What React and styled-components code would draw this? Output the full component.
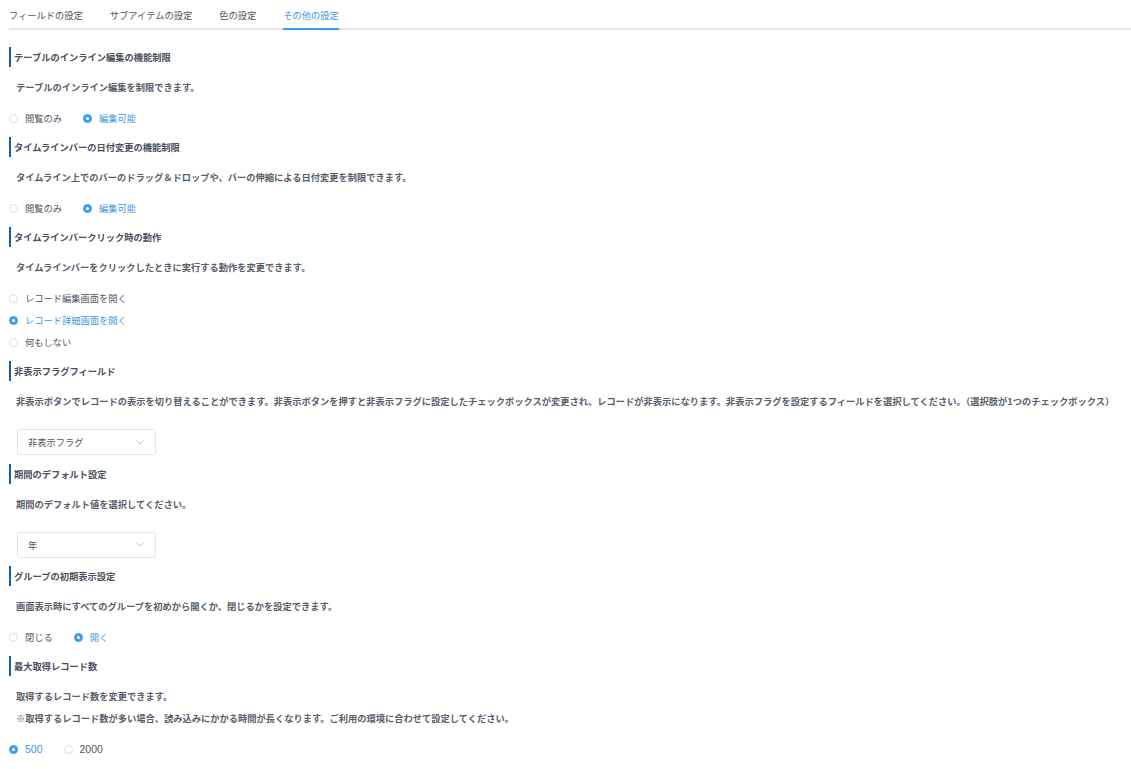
import React from "react";
import styled, { createGlobalStyle } from "styled-components";

const Global = createGlobalStyle`
  html, body { margin: 0; padding: 0; background: #fff; }
  body {
    font-family: "Noto Sans CJK JP", "Noto Sans", sans-serif;
    font-size: 9.25px;
    color: #4e5562;
  }
`;

const Page = styled.div`
  padding-left: 9px;
  display: flex;
  flex-direction: column;
`;

const TabBar = styled.div`
  display: flex;
  gap: 27px;
  height: 30px;
  box-shadow: inset 0 -2px 0 #e3e7ec;
`;

const Tab = styled.div`
  height: 30px;
  box-sizing: border-box;
  display: flex;
  align-items: center;
  padding-top: 2px;
  border-bottom: 2px solid ${(p) => (p.$active ? "#3f9cec" : "transparent")};
  color: ${(p) => (p.$active ? "#3e97e8" : "#4f5560")};
  white-space: nowrap;
`;

const Sections = styled.div`
  display: flex;
  flex-direction: column;
  padding-top: 17px;
`;

const Heading = styled.div`
  height: 20px;
  display: flex;
  align-items: center;
  border-left: 2px solid #15609b;
  padding-left: 3px;
  font-weight: 700;
  color: #4a505c;
  margin-top: ${(p) => (p.$first ? 0 : p.$afterSelect ? 8.5 : 9)}px;
`;

const Desc = styled.div`
  height: 20px;
  display: flex;
  align-items: center;
  padding-left: 7px;
  font-weight: 700;
  color: #585e6a;
  white-space: nowrap;
  margin-top: ${(p) => (p.$tight ? 2 : 10)}px;
`;

const RadioGroup = styled.div`
  display: flex;
  flex-direction: ${(p) => (p.$vertical ? "column" : "row")};
  gap: ${(p) => (p.$vertical ? "2px" : "21px")};
  margin-top: 11px;
`;

const RadioItem = styled.label`
  height: 20px;
  display: flex;
  align-items: center;
  gap: 7px;
  color: ${(p) => (p.$checked ? "#3f95e6" : "#50565f")};
  white-space: nowrap;
  font-family: ${(p) => (p.$latin ? '"Liberation Sans", "Noto Sans CJK JP", sans-serif' : "inherit")};
  font-size: ${(p) => (p.$latin ? "10.5px" : "inherit")};
`;

const Circle = styled.span`
  width: 9px;
  height: 9px;
  box-sizing: border-box;
  border-radius: 50%;
  border: 1px solid ${(p) => (p.$checked ? "#3f9cec" : "#d9dde4")};
  background: ${(p) => (p.$checked ? "#3f9cec" : "#fff")};
  display: flex;
  align-items: center;
  justify-content: center;
  &::after {
    content: "";
    width: 3px;
    height: 3px;
    border-radius: 50%;
    background: #fff;
    display: ${(p) => (p.$checked ? "block" : "none")};
  }
`;

const Select = styled.div`
  margin-top: 18px;
  margin-left: 8px;
  width: 139px;
  height: 26px;
  box-sizing: border-box;
  border: 1px solid #e3e6eb;
  border-radius: 2px;
  display: flex;
  align-items: center;
  justify-content: space-between;
  padding: 0 11px 0 10px;
  color: #50565f;
`;

const Chevron = () => (
  <svg width="8" height="5" viewBox="0 0 8 5">
    <path d="M0.5 0.5 L4 4 L7.5 0.5" fill="none" stroke="#b5bac2" strokeWidth="0.9" />
  </svg>
);

function Radios({ options, value, vertical, latin }) {
  return (
    <RadioGroup $vertical={vertical}>
      {options.map((o) => (
        <RadioItem key={o} $checked={o === value} $latin={latin}>
          <Circle $checked={o === value} />
          {o}
        </RadioItem>
      ))}
    </RadioGroup>
  );
}

export default function App() {
  return (
    <>
      <Global />
      <Page>
        <TabBar>
          <Tab>フィールドの設定</Tab>
          <Tab>サブアイテムの設定</Tab>
          <Tab>色の設定</Tab>
          <Tab $active>その他の設定</Tab>
        </TabBar>
        <Sections>
          <Heading $first>テーブルのインライン編集の機能制限</Heading>
          <Desc>テーブルのインライン編集を制限できます。</Desc>
          <Radios options={["閲覧のみ", "編集可能"]} value="編集可能" />

          <Heading>タイムラインバーの日付変更の機能制限</Heading>
          <Desc>タイムライン上でのバーのドラッグ＆ドロップや、バーの伸縮による日付変更を制限できます。</Desc>
          <Radios options={["閲覧のみ", "編集可能"]} value="編集可能" />

          <Heading>タイムラインバークリック時の動作</Heading>
          <Desc>タイムラインバーをクリックしたときに実行する動作を変更できます。</Desc>
          <Radios
            vertical
            options={["レコード編集画面を開く", "レコード詳細画面を開く", "何もしない"]}
            value="レコード詳細画面を開く"
          />

          <Heading>非表示フラグフィールド</Heading>
          <Desc>
            非表示ボタンでレコードの表示を切り替えることができます。非表示ボタンを押すと非表示フラグに設定したチェックボックスが変更され、レコードが非表示になります。非表示フラグを設定するフィールドを選択してください。（選択肢が1つのチェックボックス）
          </Desc>
          <Select>
            <span>非表示フラグ</span>
            <Chevron />
          </Select>

          <Heading $afterSelect>期間のデフォルト設定</Heading>
          <Desc>期間のデフォルト値を選択してください。</Desc>
          <Select>
            <span>年</span>
            <Chevron />
          </Select>

          <Heading $afterSelect>グループの初期表示設定</Heading>
          <Desc>画面表示時にすべてのグループを初めから開くか、閉じるかを設定できます。</Desc>
          <Radios options={["閉じる", "開く"]} value="開く" />

          <Heading>最大取得レコード数</Heading>
          <Desc>取得するレコード数を変更できます。</Desc>
          <Desc $tight>※取得するレコード数が多い場合、読み込みにかかる時間が長くなります。ご利用の環境に合わせて設定してください。</Desc>
          <Radios latin options={["500", "2000"]} value="500" />
        </Sections>
      </Page>
    </>
  );
}
